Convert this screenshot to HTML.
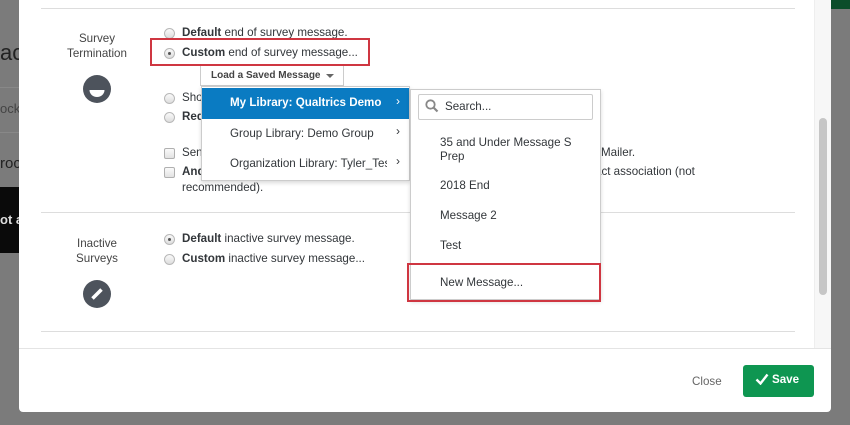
<!DOCTYPE html>
<html><head><style>
*{margin:0;padding:0;box-sizing:border-box}
body{width:850px;height:425px;overflow:hidden;background:#7b7b7b;font-family:"Liberation Sans",sans-serif;font-size:11.6px;color:#32363a;position:relative}
.a{position:absolute;white-space:nowrap}
.radio{position:absolute;width:11px;height:11px;border-radius:50%;border:1px solid #b8b8b8;background:linear-gradient(#fafafa,#ddd)}
.radio.on::after{content:"";position:absolute;left:3px;top:3px;width:3px;height:3px;border-radius:50%;background:#555}
.cb{position:absolute;width:11px;height:11px;border:1px solid #b0b0b0;border-radius:2px;background:linear-gradient(#fafafa,#e2e2e2)}
.hr{position:absolute;left:41px;width:754px;height:1px;background:#ddd}
b{font-weight:bold}
.lbl{position:absolute;text-align:center;width:80px;left:57px;line-height:15px;color:#444}
.chev{position:absolute;font-size:12px}
</style></head><body>
<div class="a" style="left:0;top:40px;font-size:22px;color:#222">acl</div>
<div class="a" style="left:0;top:101px;font-size:13px;color:#444">ock</div>
<div class="a" style="left:0;top:155px;font-size:15px;color:#222">roc</div>
<div style="position:absolute;left:0;top:187px;width:19px;height:66px;background:#0a0a0a"></div>
<div class="a" style="left:0;top:212px;font-size:13px;color:#ddd;font-weight:bold">ot a</div>
<div style="position:absolute;left:0;top:87px;width:19px;height:1px;background:#888"></div>
<div style="position:absolute;left:0;top:132px;width:19px;height:1px;background:#888"></div>
<div style="position:absolute;left:831px;top:0;width:19px;height:9px;background:#0b4d2a"></div>
<div style="position:absolute;left:19px;top:0;width:812px;height:412px;background:#fff;border-radius:0 0 4px 4px;overflow:hidden">
 <div style="position:absolute;left:795px;top:0;width:17px;height:348px;background:#f7f7f7;border-left:1px solid #eee"></div>
 <div style="position:absolute;left:800px;top:118px;width:8px;height:177px;border-radius:4px;background:#c6c6c6"></div>
 <div style="position:absolute;left:0;top:348px;width:812px;height:1px;background:#e4e4e4"></div>
</div>
<div class="hr" style="top:8px"></div>
<div class="hr" style="top:212px"></div>
<div class="hr" style="top:331px"></div>

<div class="lbl" style="top:31px">Survey<br>Termination</div>
<svg class="a" style="left:83px;top:75px" width="28" height="28"><circle cx="14" cy="14" r="14" fill="#4d535c"/><path d="M6.5 15 H21.5 A7.5 7 0 0 1 6.5 15Z" fill="#fff"/></svg>

<div class="radio" style="left:164px;top:28px"></div>
<div class="a" style="left:182px;top:26px"><b>Default</b> end of survey message.</div>
<div class="radio on" style="left:164px;top:48px"></div>
<div class="a" style="left:182px;top:46px"><b>Custom</b> end of survey message...</div>
<div style="position:absolute;left:150px;top:38px;width:220px;height:28px;border:2px solid #cf3641"></div>

<div class="a" style="left:200px;top:66px;width:144px;height:20px;border:1px solid #ccc;border-top:none;font-size:10px;font-weight:bold;color:#444;padding:4px 0 0 10px">Load a Saved Message</div>
<svg class="a" style="left:326px;top:74px" width="8" height="5"><path d="M0 0 H8 L4 4Z" fill="#666"/></svg>

<div class="radio" style="left:164px;top:93px"></div>
<div class="a" style="left:182px;top:91px">Show</div>
<div class="radio" style="left:164px;top:112px"></div>
<div class="a" style="left:182px;top:110px"><b>Red</b></div>
<div class="cb" style="left:164px;top:148px"></div>
<div class="a" style="left:182px;top:146px">Send</div>
<div class="cb" style="left:164px;top:167px"></div>
<div class="a" style="left:182px;top:165px"><b>And</b></div>
<div class="a" style="left:182px;top:181px">recommended).</div>
<div class="a" style="left:601px;top:146px">Mailer.</div>
<div class="a" style="left:595px;top:165px">act association (not</div>

<div style="position:absolute;left:201px;top:86px;width:209px;height:95px;background:#fff;border:1px solid #ccc;box-shadow:0 2px 4px rgba(0,0,0,.15)">
 <div style="position:absolute;left:0;top:1px;width:207px;height:31px;background:#0a7bc2"></div>
</div>
<div class="a" style="left:230px;top:96px;color:#fff;font-weight:bold">My Library: Qualtrics Demo</div>
<div class="chev" style="left:396px;top:94px;color:#fff">›</div>
<div class="a" style="left:230px;top:127px">Group Library: Demo Group</div>
<div class="chev" style="left:396px;top:124px">›</div>
<div class="a" style="left:230px;top:157px;width:157px;overflow:hidden">Organization Library: Tyler_Test</div>
<div class="chev" style="left:396px;top:154px">›</div>

<div style="position:absolute;left:410px;top:89px;width:191px;height:211px;background:#fff;border:1px solid #ccc;box-shadow:0 2px 4px rgba(0,0,0,.15)"></div>
<div style="position:absolute;left:418px;top:94px;width:175px;height:26px;border:1px solid #ccc;border-radius:2px"></div>
<svg class="a" style="left:425px;top:99px" width="14" height="14"><circle cx="5.5" cy="5.5" r="4.2" stroke="#888" stroke-width="1.8" fill="none"/><path d="M8.5 8.5 L12.5 12.5" stroke="#888" stroke-width="2.2"/></svg>
<div class="a" style="left:445px;top:100px">Search...</div>
<div class="a" style="left:440px;top:136px;line-height:14px">35 and Under Message S<br>Prep</div>
<div class="a" style="left:440px;top:179px">2018 End</div>
<div class="a" style="left:440px;top:209px">Message 2</div>
<div class="a" style="left:440px;top:239px">Test</div>
<div class="a" style="left:440px;top:276px">New Message...</div>
<div style="position:absolute;left:407px;top:263px;width:194px;height:39px;border:2px solid #cf3641"></div>

<div class="lbl" style="top:236px">Inactive<br>Surveys</div>
<svg class="a" style="left:83px;top:280px" width="28" height="28"><circle cx="14" cy="14" r="14" fill="#4d535c"/><path d="M9.5 18.5 L18.5 9.5" stroke="#fff" stroke-width="3.5"/></svg>
<div class="radio on" style="left:164px;top:234px"></div>
<div class="a" style="left:182px;top:232px"><b>Default</b> inactive survey message.</div>
<div class="radio" style="left:164px;top:254px"></div>
<div class="a" style="left:182px;top:252px"><b>Custom</b> inactive survey message...</div>

<div class="a" style="left:692px;top:375px;color:#666">Close</div>
<div class="a" style="left:743px;top:365px;width:71px;height:32px;background:#0e9651;border-radius:3px;color:#fff;font-weight:bold;padding:8px 0 0 12px">
<svg style="vertical-align:-2px;margin-right:3px" width="14" height="12"><path d="M1.5 6.5 L5.5 10.5 L12.5 1.5" stroke="#fff" stroke-width="2.4" fill="none"/></svg>Save</div>
</body></html>
